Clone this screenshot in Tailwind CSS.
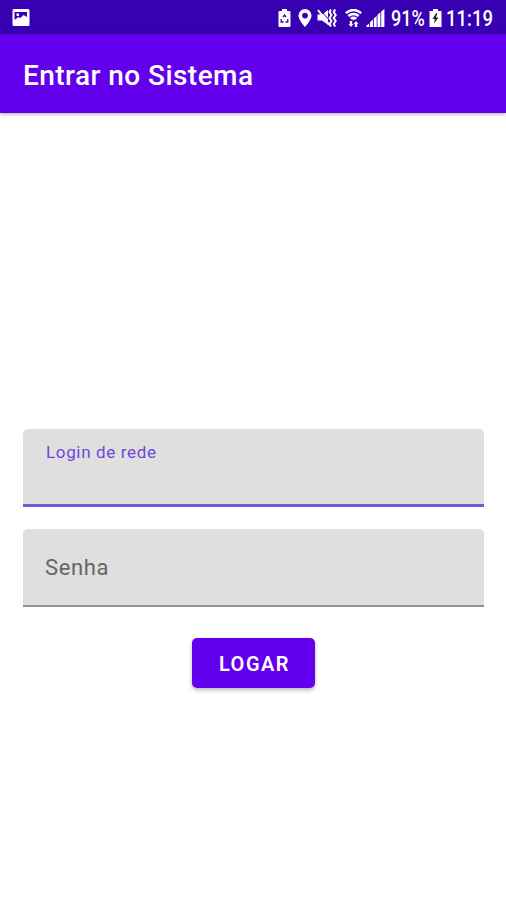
<!DOCTYPE html>
<html lang="pt-BR">
<head>
    <meta charset="UTF-8">
    <title>Entrar no Sistema</title>
    <script src="https://cdn.jsdelivr.net/npm/@tailwindcss/browser@4"></script>
</head>
<body class="flex flex-col h-screen overflow-hidden bg-white font-['Roboto',sans-serif]">

<!-- Status bar -->
<div class="flex items-start shrink-0 h-[34px] pl-3 pr-[13px] pt-[9px] bg-[#3700b3] text-white">
    <svg class="w-[18px] h-[17px]" viewBox="0 0 18 17">
        <path fill="currentColor" fill-rule="evenodd" d="M2 0h14A1.500 1.500 0 0 1 17.500 1.500v14a1.500 1.500 0 0 1-1.500 1.500H2a1.500 1.500 0 0 1-1.500-1.500v-14A1.500 1.500 0 0 1 2 0zM2.500 3v8l4-3 2 1 3-3 3.500 2V3zM4.500 4.500h2.500V7H4.500z"/>
    </svg>
    <svg class="ml-auto w-[13px] h-[18px]" viewBox="0 0 13 18">
        <path fill="currentColor" d="M4 0h5v2h2.500q1 0 1 1v14q0 1-1 1h-10q-1 0-1-1V3q0-1 1-1H4z"/>
        <path fill="none" stroke="#3700b3" stroke-width="1.300" d="M5 8l1.500-2L8 8M3.200 10v3h2.300M9.800 10v3H7.500"/>
    </svg>
    <svg class="ml-[7px] w-[14px] h-[18px]" viewBox="0 0 14 18">
        <path fill="currentColor" fill-rule="evenodd" d="M7 0a6.500 6.500 0 0 1 6.500 6.500C13.500 11 7 18 7 18S.5 11 .5 6.500A6.500 6.500 0 0 1 7 0zM7 3.700a2.900 2.900 0 1 0 0 5.800 2.900 2.900 0 0 0 0-5.800z"/>
    </svg>
    <svg class="ml-[5px] w-[20px] h-[18px]" viewBox="0 0 20 18">
        <path fill="currentColor" d="M.5 5.500H5L11 1v15l-6-4.500H.5z"/>
        <path fill="none" stroke="#3700b3" stroke-width="1" d="M4 1.500l8 9.500"/>
        <path fill="none" stroke="currentColor" stroke-width="2" d="M1 1l12 15.500"/>
        <path fill="none" stroke="currentColor" stroke-width="2" d="M14 .5l-1.500 2.500 2 3-2 3 2 3-2 3 1.500 2.500M18.200 .5l-1.500 2.500 2 3-2 3 2 3-2 3 1.500 2.500"/>
    </svg>
    <svg class="ml-[8px] w-[17px] h-[18px]" viewBox="0 0 17 18">
        <path fill="none" stroke="currentColor" stroke-width="2.400" d="M.8 4.200q7.700-6.500 15.400 0M3.300 7q5.200-4.200 10.400 0M5.700 9.700q2.800-2 5.600 0"/>
        <path fill="currentColor" d="M6.700 9.500h3.600l-1.800 2zM4.800 12h2.400v3h1.200L6 18l-2.400-3h1.200zM9.800 18v-3H8.600L11 12l2.400 3h-1.200v3z"/>
    </svg>
    <svg class="ml-[4px] w-[19px] h-[18px]" viewBox="0 0 19 18">
        <path fill="currentColor" d="M.5 16.500l2.700-2V18H.5zM4 13.200l2.900-2.600V18H4zM7.800 9.500L10.700 7v11H7.800zM11.500 5.800l2.900-2.500V18h-2.900zM15.200 2.400L18.400 0v18h-3.200z"/>
    </svg>
    <span class="ml-[6px] w-[34px] text-[22px] leading-[20px] whitespace-nowrap"><span class="inline-block origin-left scale-x-[0.82] font-medium">91%</span></span>
    <svg class="ml-[4px] w-[13px] h-[18px]" viewBox="0 0 13 18">
        <path fill="currentColor" d="M4 0h5v2h3.500v16H.5V2H4z"/>
        <path fill="#222" d="M7.200 4L3.500 10h2.300L5 14.500 9.500 8.500H7L8.300 4z"/>
    </svg>
    <span class="ml-[4px] w-[47px] text-[22px] leading-[20px] whitespace-nowrap"><span class="inline-block origin-left scale-x-[0.84] font-medium">11:19</span></span>
</div>

<!-- App bar -->
<header class="flex items-center shrink-0 h-[79px] px-[23px] pt-[4px] bg-[#6200ee] shadow-[0_1px_4px_rgba(0,0,0,0.35)]">
    <h1 class="text-[28px] font-medium tracking-[0.45px] text-white whitespace-nowrap">Entrar no Sistema</h1>
</header>

<!-- Login form -->
<form id="loginForm" class="flex flex-col items-center mt-[316px] pl-[23px] pr-[22px]">
    <label class="block w-full h-[78px] px-[23px] pt-[13px] rounded-t-[5px] bg-[#dfdfdf] border-b-3 border-[#7556dc]">
        <span class="block text-[17px] leading-[21px] tracking-[0.65px] text-[#7046dc]">Login de rede</span>
        <input type="text" name="login" class="w-full h-8 outline-none text-[22px]">
    </label>
    <label class="flex items-center w-full h-[78px] mt-[22px] px-[22px] pt-[1px] rounded-t-[5px] bg-[#dfdfdf] border-b-2 border-[#929292]">
        <input type="password" name="senha" placeholder="Senha" class="w-full outline-none text-[22px] tracking-[0.6px] placeholder:text-[#666]">
    </label>
    <button type="submit" class="w-[123px] h-[50px] mt-[31px] pl-[2px] pt-[2px] rounded-[5px] bg-[#6200ee] text-white text-[20px] font-semibold tracking-[1.5px] shadow-[0_2px_4px_rgba(0,0,0,0.3)]">LOGAR</button>
</form>

</body>
</html>
